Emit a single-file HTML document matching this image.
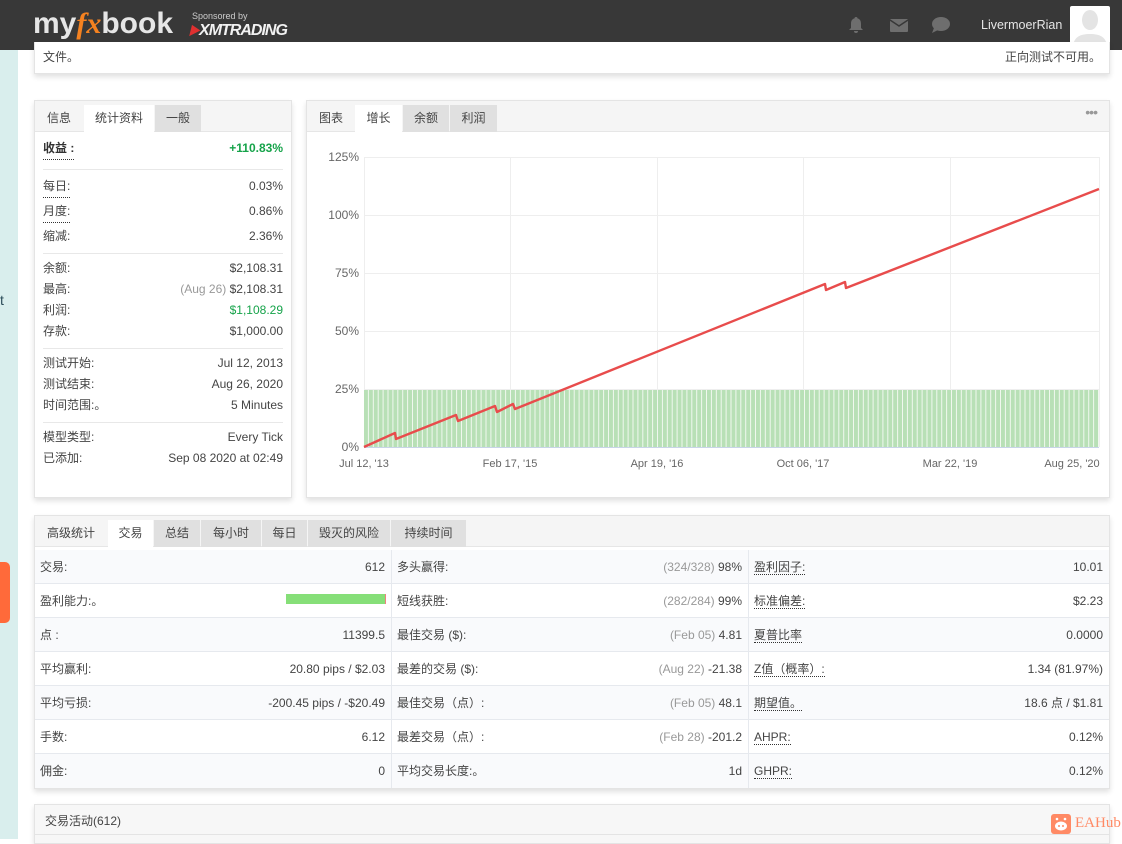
<!DOCTYPE html>
<html><head><meta charset="utf-8">
<style>
*{box-sizing:border-box;margin:0;padding:0}
body{width:1122px;height:839px;overflow:hidden;background:#fff;font-family:"Liberation Sans","Noto Sans CJK SC",sans-serif;font-size:12px;color:#444;position:relative}
.abs{position:absolute}
.hdr{left:0;top:0;width:1122px;height:50px;background:#383838}
.panel{position:absolute;background:#fff;border:1px solid #e4e4e4;box-shadow:0 3px 5px rgba(0,0,0,.12)}
.tabs{position:absolute;left:0;top:0;right:0;height:31px;background:#f5f5f5;border-bottom:1px solid #e6e6e6}
.tab{position:absolute;top:4px;height:27px;line-height:26px;text-align:center;font-size:12px;color:#444;background:#e0e0e0}
.tab.plain{background:transparent}
.tab.act{background:#fff;height:28px}
.row{position:absolute;left:8px;right:8px;height:21px;line-height:21px}
.row .l{position:absolute;left:0}
.row .r{position:absolute;right:0}
.dot{border-bottom:1px dotted #333}
.sep{position:absolute;left:8px;right:8px;height:1px;background:#e8e8e8}
.g{color:#16a34a}
.gr{color:#999}
.cell{position:absolute;height:34px;line-height:34px;border-bottom:1px solid #e6e9ee;border-right:1px solid #e6e9ee}
.cell .l{position:absolute;left:5px}
.cell .r{position:absolute;right:6px}
.alt{background:#f9fafc}
</style></head><body>
<div class="abs" style="left:0;top:50px;width:18px;height:789px;background:#d9eeed"></div>
<div class="abs" style="left:0;top:292px;font-size:14px;color:#2c4d5a">t</div>
<div class="abs" style="left:0;top:562px;width:10px;height:61px;background:#ff6a3a;border-radius:0 5px 5px 0"></div>

<div class="abs hdr"></div>
<div class="abs" style="left:33px;top:7px;font-size:30px;font-weight:bold;color:#e6e6e6;letter-spacing:0px">my<span style="color:#f58220;font-style:italic;font-family:'Liberation Serif',serif">fx</span>book</div>
<div class="abs" style="left:192px;top:11px;font-size:9px;color:#ccc">Sponsored by</div>
<div class="abs" style="left:188px;top:22px;font-size:16px;font-weight:bold;font-style:italic;color:#f2f2f2;letter-spacing:-1px"><span style="color:#e03030;font-size:12px">▶</span>XMTRADING</div>
<svg class="abs" style="left:847px;top:16px" width="18" height="18" viewBox="0 0 18 18"><path d="M9 1c-1 0-1.5.7-1.5 1.4C5 3 4 5 4 8v4l-2 2h14l-2-2V8c0-3-1-5-3.5-5.6C10.5 1.7 10 1 9 1zM7 15a2 2 0 0 0 4 0z" fill="#6e6e6e"/></svg>
<svg class="abs" style="left:889px;top:17px" width="20" height="16" viewBox="0 0 20 16"><rect x="1" y="2" width="18" height="13" rx="1" fill="#6e6e6e"/><path d="M1 3l9 6 9-6" stroke="#383838" stroke-width="1.5" fill="none"/></svg>
<svg class="abs" style="left:931px;top:16px" width="20" height="18" viewBox="0 0 20 18"><ellipse cx="10" cy="8" rx="9" ry="7" fill="#6e6e6e"/><path d="M3 12l-2 5 6-3z" fill="#6e6e6e"/></svg>
<div class="abs" style="left:981px;top:18px;font-size:12.5px;color:#e6e6e6">LivermoerRian</div>
<div class="abs" style="left:1070px;top:6px;width:40px;height:40px;background:#fff;border-radius:2px;overflow:hidden"><svg width="40" height="40" viewBox="0 0 40 40"><ellipse cx="20" cy="14" rx="8" ry="10" fill="#e4e4e4"/><path d="M3 40c1-9 7-12 17-12s16 3 17 12z" fill="#e4e4e4"/></svg></div>

<div class="panel" style="left:34px;top:42px;width:1076px;height:32px;border-top:none">
<div class="abs" style="left:8px;top:6px">文件。</div>
<div class="abs" style="right:8px;top:6px">正向测试不可用。</div>
</div>

<div class="panel" style="left:34px;top:100px;width:258px;height:398px">
<div class="tabs"><div class="tab plain" style="left:2px;width:44px">信息</div><div class="tab act" style="left:49px;width:70px">统计资料</div><div class="tab" style="left:120px;width:46px">一般</div></div>
<div class="row" style="top:37px"><span class="l dot" style="font-weight:bold;color:#333">收益 :</span><span class="r g" style="font-weight:bold">+110.83%</span></div>
<div class="sep" style="top:68px"></div>
<div class="row" style="top:75px"><span class="l dot">每日:</span><span class="r">0.03%</span></div>
<div class="row" style="top:100px"><span class="l dot">月度:</span><span class="r">0.86%</span></div>
<div class="row" style="top:125px"><span class="l">缩减:</span><span class="r">2.36%</span></div>
<div class="sep" style="top:152px"></div>
<div class="row" style="top:157px"><span class="l">余额:</span><span class="r">$2,108.31</span></div>
<div class="row" style="top:178px"><span class="l">最高:</span><span class="r"><span class="gr">(Aug 26)</span> $2,108.31</span></div>
<div class="row" style="top:199px"><span class="l">利润:</span><span class="r g">$1,108.29</span></div>
<div class="row" style="top:220px"><span class="l">存款:</span><span class="r">$1,000.00</span></div>
<div class="sep" style="top:247px"></div>
<div class="row" style="top:252px"><span class="l">测试开始:</span><span class="r">Jul 12, 2013</span></div>
<div class="row" style="top:273px"><span class="l">测试结束:</span><span class="r">Aug 26, 2020</span></div>
<div class="row" style="top:294px"><span class="l">时间范围:。</span><span class="r">5 Minutes</span></div>
<div class="sep" style="top:321px"></div>
<div class="row" style="top:326px"><span class="l">模型类型:</span><span class="r">Every Tick</span></div>
<div class="row" style="top:347px"><span class="l">已添加:</span><span class="r">Sep 08 2020 at 02:49</span></div>
</div>

<div class="panel" style="left:306px;top:100px;width:804px;height:398px">
<div class="tabs"><div class="tab plain" style="left:2px;width:44px">图表</div><div class="tab act" style="left:48px;width:47px">增长</div><div class="tab" style="left:96px;width:46px">余额</div><div class="tab" style="left:143px;width:47px">利润</div>
<div class="abs" style="right:12px;top:3px;color:#999;font-size:14px;letter-spacing:-1px">•••</div></div>
</div>
<svg class="abs" style="left:306px;top:130px" width="804" height="360" viewBox="306 130 804 360" font-family="Liberation Sans, sans-serif" font-size="12" fill="#666">
<defs><pattern id="bp" x="364" y="0" width="4.9" height="10" patternUnits="userSpaceOnUse"><rect width="4" height="10" fill="#b8e0b6"/><rect x="4" width="0.9" height="10" fill="#f0f8ef"/></pattern></defs>
<g stroke="#eee" stroke-width="1">
<line x1="364" y1="157.5" x2="1100" y2="157.5"/><line x1="364" y1="215.5" x2="1100" y2="215.5"/><line x1="364" y1="273.5" x2="1100" y2="273.5"/><line x1="364" y1="331.5" x2="1100" y2="331.5"/><line x1="364" y1="389.5" x2="1100" y2="389.5"/>
<line x1="364.5" y1="157" x2="364.5" y2="447"/><line x1="510.5" y1="157" x2="510.5" y2="447"/><line x1="657.5" y1="157" x2="657.5" y2="447"/><line x1="803.5" y1="157" x2="803.5" y2="447"/><line x1="950.5" y1="157" x2="950.5" y2="447"/><line x1="1099.5" y1="157" x2="1099.5" y2="447"/>
</g>
<rect x="364" y="390" width="735" height="57" fill="url(#bp)"/>
<line x1="364" y1="447.5" x2="1099" y2="447.5" stroke="#c8d4e8"/>
<g text-anchor="end"><text x="359" y="161">125%</text><text x="359" y="219">100%</text><text x="359" y="277">75%</text><text x="359" y="335">50%</text><text x="359" y="393">25%</text><text x="359" y="451">0%</text></g>
<g text-anchor="middle" font-size="11"><text x="364" y="467">Jul 12, '13</text><text x="510" y="467">Feb 17, '15</text><text x="657" y="467">Apr 19, '16</text><text x="803" y="467">Oct 06, '17</text><text x="950" y="467">Mar 22, '19</text><text x="1072" y="467">Aug 25, '20</text></g>
<polyline fill="none" stroke="#e84c4c" stroke-width="2.4" stroke-linejoin="round" points="364,447 395,433 396,439 456,415 458,421 495,406 497,412 513,404 515,409 825,284 826,290 845,282 846,288 1099,189"/>
</svg>

<div class="panel" style="left:34px;top:515px;width:1076px;height:274px">
<div class="tabs"><div class="tab plain" style="left:2px;width:68px">高级统计</div><div class="tab act" style="left:73px;width:45px">交易</div><div class="tab" style="left:119px;width:46px">总结</div><div class="tab" style="left:166px;width:60px">每小时</div><div class="tab" style="left:227px;width:45px">每日</div><div class="tab" style="left:273px;width:82px">毁灭的风险</div><div class="tab" style="left:356px;width:75px">持续时间</div></div>
<div class="abs" style="left:0;top:34px;width:1074px;height:238px">
<div class="cell alt" style="left:0;top:0;width:357px"><span class="l">交易:</span><span class="r">612</span></div>
<div class="abs" style="left:128px;top:34px;width:120px;height:2px;background:#fff"></div>
<div class="cell" style="left:0;top:34px;width:357px"><span class="l">盈利能力:。</span><span class="abs" style="left:251px;top:10px;width:100px;height:10px;background:#86df78;border-right:1px solid #f08080"></span></div>
<div class="cell alt" style="left:0;top:68px;width:357px"><span class="l">点 :</span><span class="r">11399.5</span></div>
<div class="cell" style="left:0;top:102px;width:357px"><span class="l">平均赢利:</span><span class="r">20.80 pips / $2.03</span></div>
<div class="cell alt" style="left:0;top:136px;width:357px"><span class="l">平均亏损:</span><span class="r">-200.45 pips / -$20.49</span></div>
<div class="cell" style="left:0;top:170px;width:357px"><span class="l">手数:</span><span class="r">6.12</span></div>
<div class="cell alt" style="left:0;top:204px;width:357px;border-bottom:none"><span class="l">佣金:</span><span class="r">0</span></div>
<div class="cell alt" style="left:357px;top:0;width:357px"><span class="l">多头赢得:</span><span class="r"><span class="gr">(324/328)</span> 98%</span></div>
<div class="cell" style="left:357px;top:34px;width:357px"><span class="l">短线获胜:</span><span class="r"><span class="gr">(282/284)</span> 99%</span></div>
<div class="cell alt" style="left:357px;top:68px;width:357px"><span class="l">最佳交易 ($):</span><span class="r"><span class="gr">(Feb 05)</span> 4.81</span></div>
<div class="cell" style="left:357px;top:102px;width:357px"><span class="l">最差的交易 ($):</span><span class="r"><span class="gr">(Aug 22)</span> -21.38</span></div>
<div class="cell alt" style="left:357px;top:136px;width:357px"><span class="l">最佳交易（点）:</span><span class="r"><span class="gr">(Feb 05)</span> 48.1</span></div>
<div class="cell" style="left:357px;top:170px;width:357px"><span class="l">最差交易（点）:</span><span class="r"><span class="gr">(Feb 28)</span> -201.2</span></div>
<div class="cell alt" style="left:357px;top:204px;width:357px;border-bottom:none"><span class="l">平均交易长度:。</span><span class="r">1d</span></div>
<div class="cell alt" style="left:714px;top:0;width:360px;border-right:none"><span class="l"><span class="dot">盈利因子:</span></span><span class="r">10.01</span></div>
<div class="cell" style="left:714px;top:34px;width:360px;border-right:none"><span class="l"><span class="dot">标准偏差:</span></span><span class="r">$2.23</span></div>
<div class="cell alt" style="left:714px;top:68px;width:360px;border-right:none"><span class="l"><span class="dot">夏普比率</span></span><span class="r">0.0000</span></div>
<div class="cell" style="left:714px;top:102px;width:360px;border-right:none"><span class="l"><span class="dot">Z值（概率）:</span></span><span class="r">1.34 (81.97%)</span></div>
<div class="cell alt" style="left:714px;top:136px;width:360px;border-right:none"><span class="l"><span class="dot">期望值。</span></span><span class="r">18.6 点 / $1.81</span></div>
<div class="cell" style="left:714px;top:170px;width:360px;border-right:none"><span class="l"><span class="dot">AHPR:</span></span><span class="r">0.12%</span></div>
<div class="cell alt" style="left:714px;top:204px;width:360px;border-right:none;border-bottom:none"><span class="l"><span class="dot">GHPR:</span></span><span class="r">0.12%</span></div>
</div>
</div>

<div class="panel" style="left:34px;top:804px;width:1076px;height:40px;background:#f7f7f7">
<div class="abs" style="left:10px;top:7px">交易活动(612)</div>
<div class="abs" style="left:0;top:29px;width:1074px;height:1px;background:#e4e4e4"></div>
</div>
<div class="abs" style="left:1051px;top:814px;width:20px;height:20px;background:#ff8a65;border-radius:3px"><svg width="20" height="20" viewBox="0 0 20 20"><ellipse cx="10" cy="12" rx="6" ry="4.5" fill="#fff"/><circle cx="6" cy="5" r="1.3" fill="#fff"/><circle cx="14" cy="5" r="1.3" fill="#fff"/><circle cx="8" cy="12" r="1" fill="#ff8a65"/><circle cx="12" cy="12" r="1" fill="#ff8a65"/></svg></div>
<div class="abs" style="left:1075px;top:815px;font-family:'Liberation Serif',serif;font-size:15px;color:#ff8a65">EAHub</div>
</body></html>
